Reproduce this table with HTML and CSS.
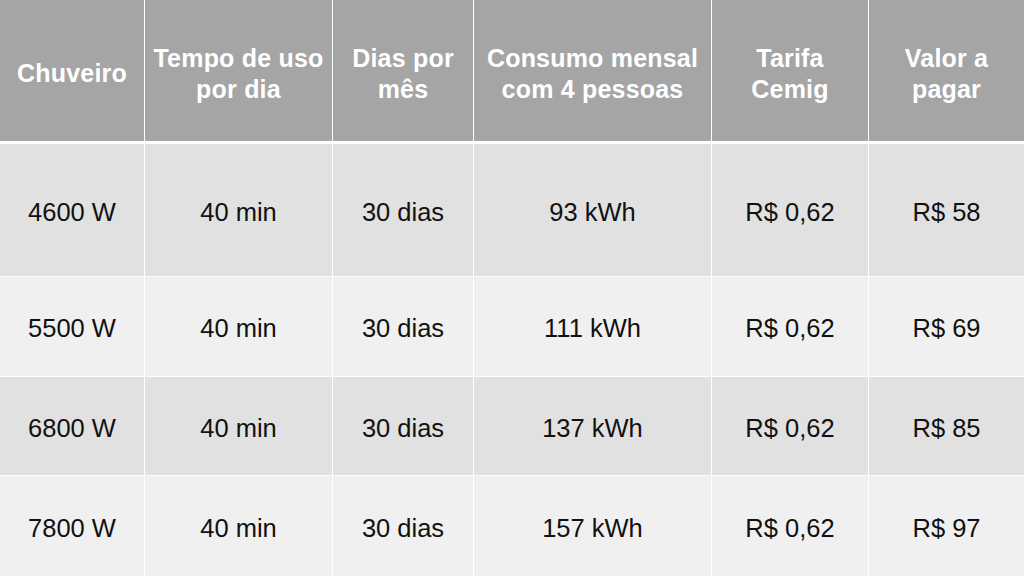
FILE: index.html
```html
<!DOCTYPE html>
<html lang="pt">
<head>
<meta charset="utf-8">
<title>Consumo de chuveiros</title>
<link rel="stylesheet" href="styles.css">
</head>
<body>
<div class="table">
  <div class="row head">
    <div class="cell">Chuveiro</div>
    <div class="cell">Tempo de uso<br>por dia</div>
    <div class="cell">Dias por<br>mês</div>
    <div class="cell">Consumo mensal<br>com 4 pessoas</div>
    <div class="cell">Tarifa<br>Cemig</div>
    <div class="cell">Valor a<br>pagar</div>
  </div>
  <div class="row dark r1">
    <div class="cell">4600 W</div>
    <div class="cell">40 min</div>
    <div class="cell">30 dias</div>
    <div class="cell">93 kWh</div>
    <div class="cell">R$ 0,62</div>
    <div class="cell">R$ 58</div>
  </div>
  <div class="row light r2">
    <div class="cell">5500 W</div>
    <div class="cell">40 min</div>
    <div class="cell">30 dias</div>
    <div class="cell">111 kWh</div>
    <div class="cell">R$ 0,62</div>
    <div class="cell">R$ 69</div>
  </div>
  <div class="row dark r3">
    <div class="cell">6800 W</div>
    <div class="cell">40 min</div>
    <div class="cell">30 dias</div>
    <div class="cell">137 kWh</div>
    <div class="cell">R$ 0,62</div>
    <div class="cell">R$ 85</div>
  </div>
  <div class="row light r4">
    <div class="cell">7800 W</div>
    <div class="cell">40 min</div>
    <div class="cell">30 dias</div>
    <div class="cell">157 kWh</div>
    <div class="cell">R$ 0,62</div>
    <div class="cell">R$ 97</div>
  </div>
</div>
</body>
</html>
```

FILE: styles.css
```css
html, body {
  margin: 0;
  padding: 0;
  background: #ffffff;
}

body {
  width: 1024px;
  height: 576px;
  overflow: hidden;
  font-family: "Liberation Sans", Arial, sans-serif;
}

.table {
  display: flex;
  flex-direction: column;
  gap: 1px;
  height: 576px;
  background: #ffffff;
}

.row {
  display: grid;
  grid-template-columns: 144px 187px 140px 237px 156px 1fr;
  column-gap: 1px;
}

.cell {
  display: flex;
  align-items: center;
  justify-content: center;
  text-align: center;
}

.head {
  height: 141px;
  margin-bottom: 2px;
}

.head .cell {
  background: #a5a5a5;
  color: #ffffff;
  font-weight: bold;
  font-size: 25px;
  line-height: 31px;
  letter-spacing: 0.2px;
  padding-top: 6px;
}

.dark .cell {
  background: #e1e1e1;
}

.light .cell {
  background: #f0f0f0;
}

.row:not(.head) .cell {
  color: #111111;
  font-size: 25.5px;
  padding-top: 4px;
}

.r1 { height: 132px; }
.r2 { height: 99px; }
.r3 { height: 98px; }
.r4 { flex: 1; }
```
